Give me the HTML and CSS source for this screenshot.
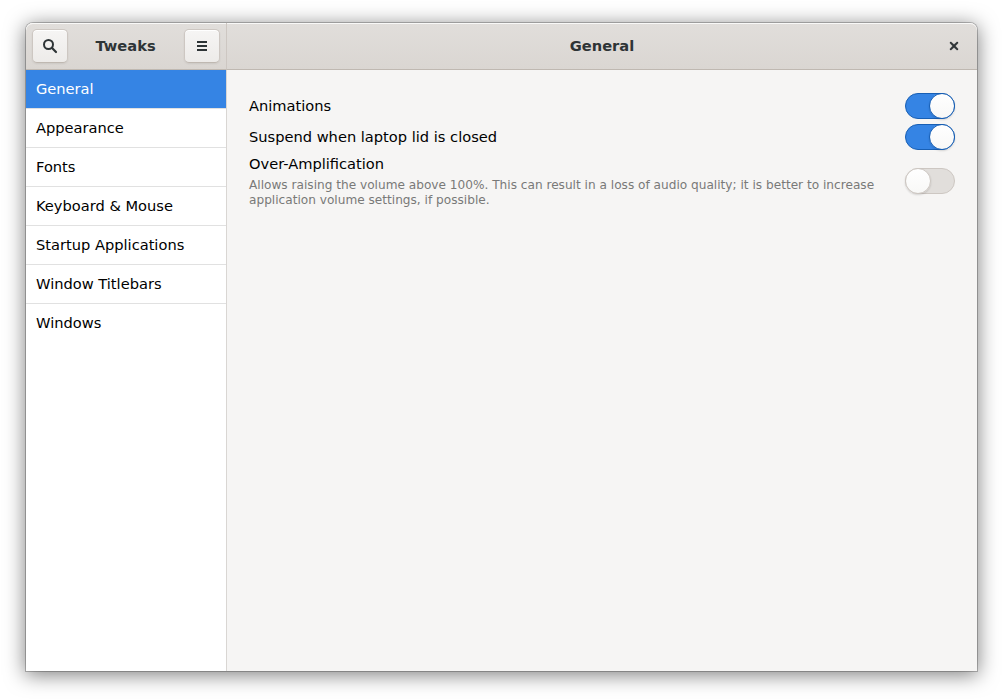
FILE: index.html
```html
<!DOCTYPE html>
<html lang="en">
<head>
<meta charset="utf-8">
<title>Tweaks</title>
<link rel="stylesheet" href="styles.css">
</head>
<body>
<div class="window">
  <aside class="sidebar">
    <header class="headerbar side-header">
      <button class="button" aria-label="Search">
        <svg width="16" height="16" viewBox="0 0 16 16"><circle cx="6.5" cy="6.5" r="4.5" fill="none" stroke="#2e3436" stroke-width="2"/><path d="M9.8 9.8L14 14" stroke="#2e3436" stroke-width="2.2" stroke-linecap="round"/></svg>
      </button>
      <h1 class="title">Tweaks</h1>
      <button class="button" aria-label="Menu">
        <svg width="16" height="16" viewBox="0 0 16 16" shape-rendering="crispEdges"><path d="M3 3h10v2H3zM3 7h10v2H3zM3 11h10v2H3z" fill="#2e3436"/></svg>
      </button>
    </header>
    <nav class="list">
      <a class="row selected">General</a>
      <a class="row">Appearance</a>
      <a class="row">Fonts</a>
      <a class="row">Keyboard &amp; Mouse</a>
      <a class="row">Startup Applications</a>
      <a class="row">Window Titlebars</a>
      <a class="row last">Windows</a>
    </nav>
  </aside>
  <main class="main">
    <header class="headerbar main-header">
      <h2 class="title">General</h2>
      <button class="close" aria-label="Close">
        <svg width="16" height="16" viewBox="0 0 16 16"><path d="M4 4h1.2L8 6.6 10.8 4H12v1.2L9.4 8l2.6 2.8V12h-1.2L8 9.4 5.2 12H4v-1.2L6.6 8 4 5.2z" fill="#2e3436" stroke="#2e3436" stroke-width=".3"/></svg>
      </button>
    </header>
    <section class="content">
      <div class="setting"><span class="label">Animations</span><span class="switch on"><span class="knob"></span></span></div>
      <div class="setting"><span class="label">Suspend when laptop lid is closed</span><span class="switch on"><span class="knob"></span></span></div>
      <div class="setting">
        <div class="text"><div>Over-Amplification</div><div class="description">Allows raising the volume above 100%. This can result in a loss of audio quality; it is better to increase<br>application volume settings, if possible.</div></div>
        <span class="switch"><span class="knob"></span></span>
      </div>
    </section>
  </main>
</div>
</body>
</html>
```
FILE: styles.css
```css
* { box-sizing: border-box; }
body {
  margin: 0;
  padding: 23px 26px 29px;
  height: 700px;
  background: #fff;
  overflow: hidden;
  font: 14.64px/17px "DejaVu Sans", sans-serif;
  color: #000;
}
.window {
  display: flex;
  height: 648px;
  border-radius: 7px 7px 0 0;
  background: #f6f5f4;
  box-shadow: 0 3px 20px 1px rgba(0,0,0,.5), 0 0 0 1px rgba(0,0,0,.23);
}
.sidebar {
  display: flex;
  flex-direction: column;
  width: 201px;
  border-right: 1px solid #d9d6d3;
  border-top-left-radius: 7px;
  background: #fff;
}
.headerbar {
  display: flex;
  align-items: center;
  height: 47px;
  border-bottom: 1px solid #bfb8b1;
  background: linear-gradient(to top, #dad6d2, #e1dedb);
  box-shadow: inset 0 1px rgba(255,255,255,.8);
}
.side-header {
  justify-content: space-between;
  width: 201px;
  flex: none;
  padding: 0 6px;
  border-right: 1px solid #cdc7c2;
  border-top-left-radius: 7px;
}
.side-header .title { padding-right: 1px; }
.main-header {
  display: grid;
  grid-template-columns: 1fr auto 1fr;
  padding-right: 11px;
  padding-left: 11px;
  border-top-right-radius: 7px;
}
.main-header .title { grid-column: 2; }
.title {
  margin: 0;
  padding-bottom: 2px;
  font-size: 14.667px;
  font-weight: bold;
  color: #2e3436;
}
.button {
  display: flex;
  align-items: center;
  justify-content: center;
  width: 36px;
  height: 34px;
  padding: 0;
  border: 1px solid #cdc7c2;
  border-bottom-color: #bfb8b1;
  border-radius: 5px;
  background: linear-gradient(to top, #edebe9, #f6f5f4);
  box-shadow: inset 0 1px #fff, 0 1px 2px rgba(0,0,0,.07);
}
.close {
  justify-self: end;
  width: 24px;
  height: 24px;
  padding: 4px;
  border: 0;
  background: none;
}
.close svg { display: block; }
.row {
  display: block;
  height: 39px;
  padding: 10px;
  border-bottom: 1px solid #e1e1e1;
}
.row.last { border-bottom: 0; }
.row.selected { background: #3584e4; background-clip: padding-box; color: #fff; }
.main { flex: 1; }
.content {
  display: flex;
  flex-direction: column;
  gap: 5px;
  padding: 23px 22px;
}
.setting {
  display: flex;
  align-items: center;
  justify-content: space-between;
}
.label { padding-bottom: 2px; }
.text { height: 52px; }
.description {
  margin-top: 6px;
  font-size: 12.14px;
  line-height: 15px;
  color: #797978;
  white-space: nowrap;
}
.switch {
  display: flex;
  flex: none;
  width: 50px;
  height: 26px;
  border: 1px solid #cdc7c2;
  border-radius: 13px;
  background: #e1dedb;
}
.knob {
  width: 26px;
  height: 26px;
  margin: -1px;
  border: 1px solid #cdc7c2;
  border-radius: 50%;
  background: linear-gradient(to top, #f8f8f7, #fff);
  box-shadow: 0 1px 2px rgba(0,0,0,.14);
}
.switch.on {
  justify-content: flex-end;
  border-color: #185fb4;
  background: #3584e4;
}
.on .knob { border-color: #185fb4; }
```
